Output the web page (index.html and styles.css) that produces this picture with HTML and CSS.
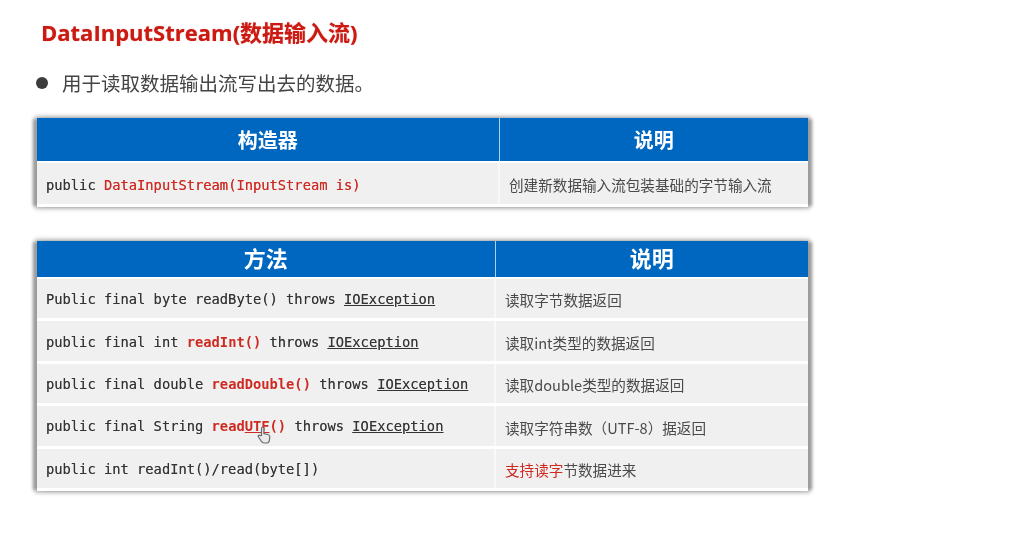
FILE: index.html
```html
<!DOCTYPE html>
<html lang="zh">
<head>
<meta charset="utf-8">
<title>DataInputStream</title>
<link rel="stylesheet" href="styles.css">
</head>
<body>
<main class="page">
  <h1 class="title">DataInputStream(数据输入流)</h1>
  <p class="lead"><span class="dot"></span>用于读取数据输出流写出去的数据。</p>

  <table class="tbl tbl-ctor">
    <thead><tr><th class="c1">构造器</th><th>说明</th></tr></thead>
    <tbody>
      <tr><td class="code">public <span class="red">DataInputStream(InputStream is)</span></td><td class="desc">创建新数据输入流包装基础的字节输入流</td></tr>
    </tbody>
  </table>

  <table class="tbl tbl-meth">
    <thead><tr><th class="c1">方法</th><th>说明</th></tr></thead>
    <tbody>
      <tr><td class="code">Public final byte readByte() throws <u>IOException</u></td><td class="desc">读取字节数据返回</td></tr>
      <tr><td class="code">public final int <span class="red">readInt()</span> throws <u>IOException</u></td><td class="desc">读取int类型的数据返回</td></tr>
      <tr><td class="code">public final double <span class="red">readDouble()</span> throws <u>IOException</u></td><td class="desc">读取double类型的数据返回</td></tr>
      <tr><td class="code">public final String <span class="red">read<span class="utf">UTF<svg class="hand" viewBox="0 0 14 18" width="14" height="18"><path d="M4.5 9.5V2.4c0-1.800 2.400-1.800 2.400 0V7.600l4 .9c1.400.3 2 1.200 1.900 2.500l-.4 3.200c-.2 1.600-1 2.800-2.600 2.800H7c-1.300 0-2-.6-2.700-1.700L1.500 11c-.9-1.400.9-2.700 2-1.300z" fill="#e9e9e9" stroke="#6a6a6a" stroke-width="1.200" stroke-linejoin="round"/></svg></span>()</span> throws <u>IOException</u></td><td class="desc">读取字符串数（UTF-8）据返回</td></tr>
      <tr><td class="code">public int readInt()/read(byte[])</td><td class="desc"><span class="red">支持读字</span>节数据进来</td></tr>
    </tbody>
  </table>
</main>
</body>
</html>
```
FILE: styles.css
```css
* { box-sizing: border-box; }
html, body { margin: 0; background: #fff; }
body { width: 1024px; height: 543px; overflow: hidden; font-family: "Noto Sans CJK SC", "Noto Sans", sans-serif; }
.page { padding: 18px 0 0 37px; filter: blur(0.4px); }
.title { margin: 0 0 0 4px; font-family: "Open Sans", "Noto Sans CJK SC", sans-serif; font-size: 22px; line-height: 28px; font-weight: 700; color: #cc1a12; text-shadow: 0 0 1px rgba(204,26,18,.5); }
.lead { display: flex; align-items: center; margin: 23px 0 0 -1px; font-size: 19.5px; line-height: 28px; color: #444; }
.dot { width: 12px; height: 12px; border-radius: 50%; background: #3c3c3c; margin-right: 14px; }
.tbl { width: 771px; table-layout: fixed; border-collapse: collapse; background: #fff; box-shadow: -5px 0 3px -1px #9c9c9c, 5px 0 3px -1px #9c9c9c, 0 0 4px 2px #bdbdbd; }
.tbl-ctor { margin-top: 21px; }
.tbl-meth { margin-top: 34px; }
.tbl th { background: #0067c0; color: #fff; font-size: 20px; font-weight: 700; padding: 0; text-align: center; border-left: 1px solid #a9d0ee; border-bottom: 2px solid #fff; line-height: 1; }
.tbl th.c1 { border-left: 0; }
.tbl td { background: #f0f0f0; padding: 0 0 0 9px; border-bottom: 3px solid #fff; border-left: 2px solid #f8f8f8; vertical-align: middle; }
.tbl td.code { border-left: 0; }
.tbl-ctor .c1 { width: 462px; }
.tbl-meth .c1 { width: 458px; }
.tbl-ctor th { height: 44px; }
.tbl-ctor td { height: 43px; padding-top: 3px; }
.tbl-meth th { height: 37px; font-size: 22px; padding-bottom: 3px; }
.tbl-meth td { height: 42.4px; padding-top: 3px; }
.tbl-meth td.code { padding-top: 1px; }
.code { font-family: "DejaVu Sans Mono", "Liberation Mono", monospace; font-size: 13.75px; color: #333; white-space: nowrap; text-shadow: 0 0 .5px rgba(40,40,40,.6); }
.desc { font-size: 14.6px; color: #4a4a4a; white-space: nowrap; }
.red { color: #cf2a22; }
.code .red { text-shadow: 0 0 .6px rgba(207,42,34,.8); }
.tbl-meth .code .red { font-weight: 700; text-shadow: none; }
.utf { position: relative; display: inline-block; text-decoration: underline; }
.hand { position: absolute; left: 12px; top: 8px; }
```
